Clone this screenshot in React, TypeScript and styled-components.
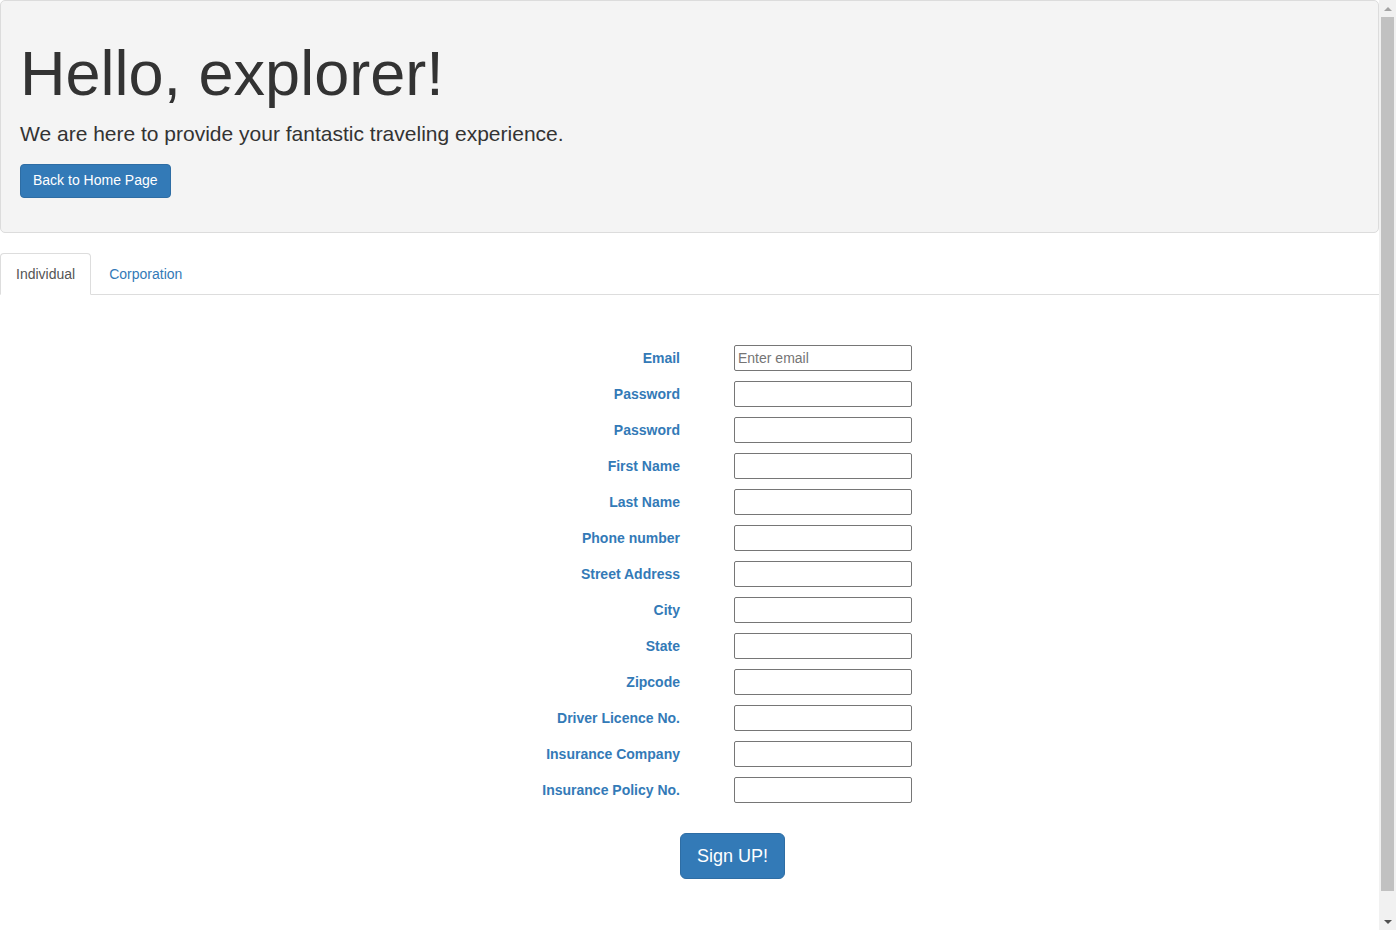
import React from "react";
import styled, { createGlobalStyle } from "styled-components";

const Global = createGlobalStyle`
  html, body { margin: 0; padding: 0; overflow: hidden; }
  body {
    font-family: "Liberation Sans", Arial, Helvetica, sans-serif;
    font-size: 14px;
    line-height: 1.42857;
    color: #333;
    background: #fff;
  }
  * { box-sizing: border-box; }
`;

const Shell = styled.div`
  display: flex;
  width: 1396px;
  height: 930px;
  overflow: hidden;
`;

const Page = styled.main`
  flex: 1;
  min-width: 0;
`;

const Jumbotron = styled.section`
  background: #f4f4f4;
  border: 1px solid #dcdcdc;
  border-radius: 5px;
  padding: 18px 19px 34px;
`;

const Title = styled.h1`
  margin: 20px 0 11px;
  font-size: 63px;
  font-weight: 500;
  line-height: 1.1;
  color: #333;
`;

const Lead = styled.p`
  margin: 0 0 15px;
  font-size: 21px;
  font-weight: 200;
  line-height: 1.42857;
`;

const Button = styled.button<{ $lg?: boolean }>`
  display: inline-block;
  font-family: inherit;
  color: #fff;
  background: #337ab7;
  border: 1px solid #2e6da4;
  cursor: pointer;
  padding: ${(p) => (p.$lg ? "10px 16px" : "6px 12px")};
  font-size: ${(p) => (p.$lg ? "18px" : "14px")};
  line-height: ${(p) => (p.$lg ? "1.3333333" : "1.42857")};
  border-radius: ${(p) => (p.$lg ? "6px" : "4px")};
`;

const Tabs = styled.ul`
  list-style: none;
  margin: 20px 0 0;
  padding: 0;
  display: flex;
  border-bottom: 1px solid #ddd;
`;

const Tab = styled.li<{ $active?: boolean }>`
  margin: 0 2px -1px 0;
  padding: 10px 15px;
  line-height: 20px;
  border: 1px solid ${(p) => (p.$active ? "#ddd" : "transparent")};
  border-bottom-color: transparent;
  border-radius: 4px 4px 0 0;
  background: ${(p) => (p.$active ? "#fff" : "transparent")};
  color: ${(p) => (p.$active ? "#555" : "#337ab7")};
`;

const Form = styled.form`
  display: grid;
  grid-template-columns: 680px 178px;
  column-gap: 54px;
  row-gap: 10px;
  margin-top: 50px;
  align-items: center;
`;

const Label = styled.label`
  text-align: right;
  font-weight: 700;
  color: #337ab7;
  padding-top: 2px;
`;

const Input = styled.input`
  height: 26px;
  width: 178px;
  padding: 1px 3px;
  font-family: inherit;
  font-size: 14px;
  border: 1px solid #767676;
  border-radius: 2px;
  color: #333;
  &::placeholder { color: #757575; }
`;

const Actions = styled.div`
  margin: 30px 0 0 680px;
`;

const Scrollbar = styled.div`
  width: 17px;
  flex: none;
  background: #f1f1f1;
  display: flex;
  flex-direction: column;
  align-items: center;
`;

const Arrow = styled.div<{ $down?: boolean }>`
  height: 17px;
  width: 17px;
  display: flex;
  align-items: center;
  justify-content: center;
  &::before {
    content: "";
    border-left: 4px solid transparent;
    border-right: 4px solid transparent;
    ${(p) => (p.$down ? "border-top: 4px solid #505050;" : "border-bottom: 4px solid #a3a3a3;")}
  }
`;

const Thumb = styled.div`
  width: 13px;
  height: 874px;
  background: #c1c1c1;
`;

const Spacer = styled.div`
  flex: 1;
`;

const fields = [
  { label: "Email", type: "email", placeholder: "Enter email" },
  { label: "Password", type: "password" },
  { label: "Password", type: "password" },
  { label: "First Name" },
  { label: "Last Name" },
  { label: "Phone number" },
  { label: "Street Address" },
  { label: "City" },
  { label: "State" },
  { label: "Zipcode" },
  { label: "Driver Licence No." },
  { label: "Insurance Company" },
  { label: "Insurance Policy No." },
];

export default function App() {
  return (
    <Shell>
      <Global />
      <Page>
        <Jumbotron>
          <Title>Hello, explorer!</Title>
          <Lead>We are here to provide your fantastic traveling experience.</Lead>
          <Button type="button">Back to Home Page</Button>
        </Jumbotron>
        <Tabs>
          <Tab $active>Individual</Tab>
          <Tab>Corporation</Tab>
        </Tabs>
        <Form onSubmit={(e) => e.preventDefault()}>
          {fields.map((f, i) => (
            <React.Fragment key={i}>
              <Label htmlFor={`f${i}`}>{f.label}</Label>
              <Input id={`f${i}`} type={f.type || "text"} placeholder={f.placeholder} />
            </React.Fragment>
          ))}
        </Form>
        <Actions>
          <Button $lg type="submit">Sign UP!</Button>
        </Actions>
      </Page>
      <Scrollbar>
        <Arrow />
        <Thumb />
        <Spacer />
        <Arrow $down />
      </Scrollbar>
    </Shell>
  );
}
